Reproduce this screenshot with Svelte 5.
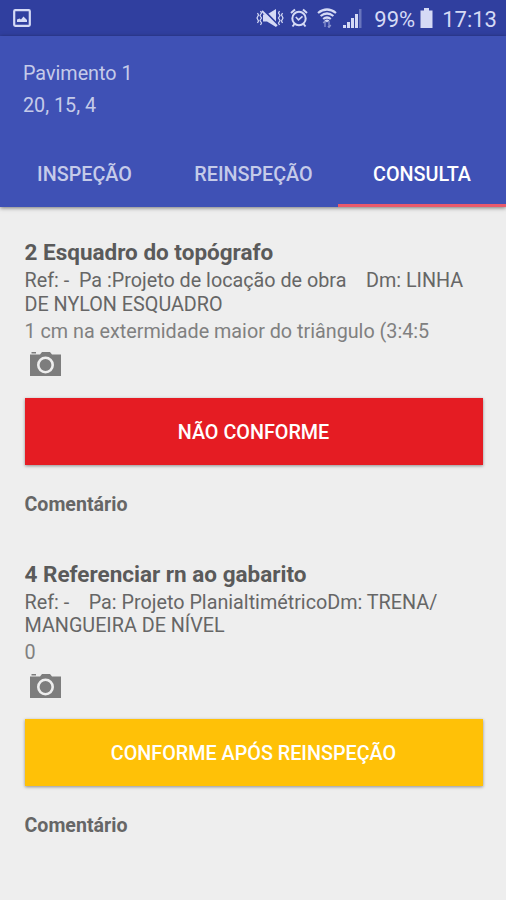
<script>
  let active = $state(2);

  const tabs = ['INSPEÇÃO', 'REINSPEÇÃO', 'CONSULTA'];

  const items = [
    {
      title: '2 Esquadro do topógrafo',
      lines: ['Ref: -  Pa :Projeto de locação de obra    Dm: LINHA', 'DE NYLON ESQUADRO'],
      note: '1 cm na extermidade maior do triângulo (3:4:5',
      status: 'NÃO CONFORME',
      kind: 'bad'
    },
    {
      title: '4 Referenciar rn ao gabarito',
      lines: ['Ref: -    Pa: Projeto PlanialtimétricoDm: TRENA/', 'MANGUEIRA DE NÍVEL'],
      note: '0',
      status: 'CONFORME APÓS REINSPEÇÃO',
      kind: 'fixed'
    }
  ];
</script>

<div class="screen">
  <div class="status">
    <svg class="picture" width="18" height="18" viewBox="0 0 18 18">
      <rect x="1.2" y="1.2" width="15.6" height="15.6" rx="1" fill="none" stroke="currentColor" stroke-width="2.2" />
      <path d="M4 13V10.5L6.5 9.5 8 10.5 10.5 7.5 14 11V13Z" fill="currentColor" />
    </svg>

    <svg class="mute" width="28" height="20" viewBox="0 0 28 20">
      <path d="M7 6.5H11L20 1V19L11 13.5H7Z" fill="currentColor" />
      <path d="M7 1.5L22 17" stroke="#303f9f" stroke-width="2" />
      <path d="M6 3L21 18" stroke="currentColor" stroke-width="1.8" />
      <path d="M4.5 3L5.5 5 4 7.5 5.5 10 4 12.5 5.5 15 4.5 17M1.5 5L2.5 7 1 10 2.5 13 1.5 15M23.5 3L22.5 5 24 7.5 22.5 10 24 12.5 22.5 15 23.5 17M26.5 5L25.5 7 27 10 25.5 13 26.5 15" fill="none" stroke="currentColor" stroke-width="1.2" />
    </svg>

    <svg class="alarm" width="18" height="20" viewBox="0 0 18 20">
      <circle cx="9" cy="10.5" r="6.7" fill="none" stroke="currentColor" stroke-width="2" />
      <path d="M1 5L5 1.5M13 1.5L17 5M4.5 16L2.5 18.5M13.5 16L15.5 18.5" stroke="currentColor" stroke-width="2" />
      <path d="M5.8 9L8.5 11.8 12.5 8.3" fill="none" stroke="currentColor" stroke-width="1.6" />
    </svg>

    <svg class="wifi" width="20" height="20" viewBox="0 0 20 20">
      <path d="M1 5Q10 -2 19 5M3.6 8Q10 3 16.4 8M6.2 11Q10 8 13.8 11" fill="none" stroke="currentColor" stroke-width="2.2" />
      <path d="M7.6 12.2Q10 10.6 12.4 12.2L10 14.5Z" fill="currentColor" />
      <path d="M8 19V13M6.2 15L8 13 9 14M12 13V19M11 18L12 19.5 13.8 17" fill="none" stroke="currentColor" stroke-width="1.3" opacity=".55" />
    </svg>

    <svg class="signal" width="19" height="19" viewBox="0 0 19 19">
      <path d="M0 16H3V19H0ZM4 13H7V19H4ZM8 9H11V19H8ZM12 5H15V19H12Z" fill="currentColor" />
      <path d="M16 0H18.5V19H16Z" fill="currentColor" opacity=".35" />
    </svg>

    <span class="percent">99%</span>
    <svg class="battery" width="13" height="20" viewBox="0 0 13 20">
      <path d="M4 0H9V2.5H12.5V20H.5V2.5H4Z" fill="currentColor" />
    </svg>
    <span class="clock">17:13</span>
  </div>

  <header>
    <div class="place">
      <div>Pavimento 1</div>
      <div>20, 15, 4</div>
    </div>
    <nav>
      {#each tabs as tab, i}
        <button class="tab" class:active={active === i} onclick={() => (active = i)}>{tab}</button>
      {/each}
    </nav>
  </header>

  <main>
    {#each items as item}
      <section>
        <h2>{item.title}</h2>
        {#each item.lines as line}
          <div class="line">{line}</div>
        {/each}
        <div class="note">{item.note}</div>
        <svg class="camera" width="31" height="26" viewBox="0 0 31 26">
          <path d="M0 3.5H10L12 1H20L22 3.5H31V25H0Z" fill="#7d7d7d" />
          <rect x="1.5" y="1" width="4.5" height="1.5" fill="#7d7d7d" />
          <circle cx="15.5" cy="14" r="7.2" fill="none" stroke="#eee" stroke-width="2.6" />
        </svg>
        <button class="result {item.kind}">{item.status}</button>
        <div class="comment">Comentário</div>
      </section>
    {/each}
  </main>
</div>

<style>
  :global(body) {
    background: #eee;
  }

  .screen {
    height: 900px;
    overflow: hidden;
    background: #eee;
    font-family: Roboto, "Liberation Sans", sans-serif;
    font-size: 19.75px;
    color: #666;
  }

  button {
    border: 0;
    padding: 0;
    font-family: inherit;
    font-weight: 500;
    font-size: 19.75px;
  }

  .status {
    display: flex;
    align-items: center;
    box-sizing: border-box;
    height: 36px;
    padding: 0 9px 0 13px;
    background: #303f9f;
    color: #d5daf5;
    font-size: 22px;
  }
  .status svg { flex: none; }
  .mute { margin-left: auto; }
  .alarm { margin-left: 6px; }
  .wifi { margin-left: 9px; }
  .signal { margin-left: 6px; }
  .percent { margin-left: 12px; }
  .battery { margin-left: 5px; }
  .clock { margin-left: 9px; }
  .percent, .clock { padding-top: 2px; }

  header {
    position: relative;
    height: 171px;
    background: #3f51b5;
    color: #c5cbe9;
    box-shadow: 0 1px 4px rgba(0, 0, 0, 0.5);
  }
  .place {
    height: 104px;
    padding: 22px 23px 0;
    box-sizing: border-box;
    line-height: 32px;
  }

  nav {
    display: grid;
    grid-template-columns: 169px 169px 168px;
    height: 67px;
  }
  .tab {
    padding-top: 5px;
    background: none;
    color: #c5cbe9;
    border-bottom: 3px solid transparent;
  }
  .tab.active {
    color: #fff;
    border-bottom-color: #e9596b;
  }

  main {
    padding: 31px 24px 0 24.5px;
  }
  section {
    display: flex;
    flex-direction: column;
    height: 321.5px;
  }
  h2 {
    margin: 0 0 3px;
    font-size: 22.5px;
    font-weight: 700;
    line-height: 28px;
    color: #5a5a5a;
  }
  .line, .note {
    line-height: 23.5px;
    white-space: pre;
  }
  .note {
    margin-top: 3.5px;
    color: #808080;
  }
  .camera {
    margin: 8px 0 0 5.5px;
  }
  .result {
    flex: none;
    width: 458px;
    height: 67px;
    margin-top: 20.5px;
    padding-top: 2px;
    color: #fff;
    box-shadow: 0 1px 3px rgba(0, 0, 0, 0.4);
  }
  .bad { background: #e51c23; }
  .fixed { background: #ffc107; }
  .comment {
    margin-top: 28px;
    font-size: 19.6px;
    font-weight: 700;
    line-height: 24px;
  }
</style>
